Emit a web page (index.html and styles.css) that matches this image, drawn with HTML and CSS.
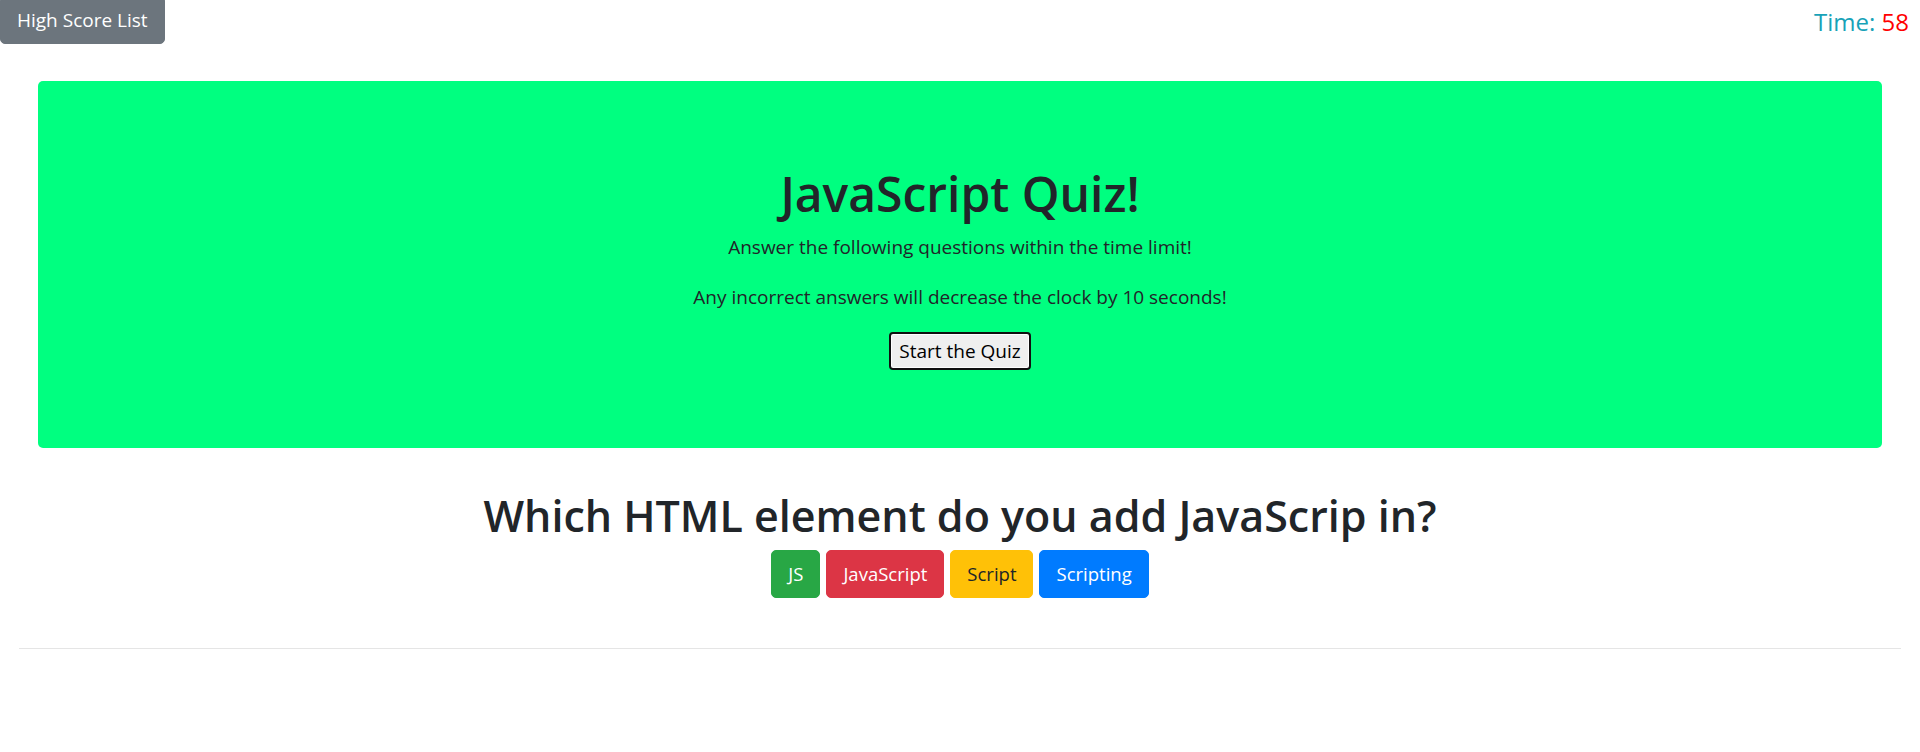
FILE: index.html
```html
<!DOCTYPE html>
<html lang="en">
<head>
<meta charset="utf-8">
<title>JavaScript Quiz</title>
<link rel="stylesheet" href="styles.css">
</head>
<body>
<header class="topbar">
  <button class="btn btn-secondary hs-btn">High Score List</button>
  <div class="timer">Time: <span class="secs">58</span></div>
</header>
<main class="page">
  <section class="jumbo">
    <h1 class="jumbo-title">JavaScript Quiz!</h1>
    <p class="lead">Answer the following questions within the time limit!</p>
    <p class="lead">Any incorrect answers will decrease the clock by 10 seconds!</p>
    <button class="start-btn">Start the Quiz</button>
  </section>
  <section class="question">
    <h2 class="question-title">Which HTML element do you add JavaScrip in?</h2>
    <div class="answers">
      <button class="btn btn-success">JS</button>
      <button class="btn btn-danger">JavaScript</button>
      <button class="btn btn-warning">Script</button>
      <button class="btn btn-primary">Scripting</button>
    </div>
  </section>
  <hr class="rule">
</main>
</body>
</html>
```

FILE: styles.css
```css
* { box-sizing: border-box; }

html, body {
  margin: 0;
  padding: 0;
  background: #fff;
}

body {
  font-family: "Open Sans", "Noto Sans", sans-serif;
  color: #212529;
  font-size: 16px;
}

.topbar {
  display: flex;
  justify-content: space-between;
  align-items: flex-start;
  height: 44px;
}

.btn {
  font-family: inherit;
  font-size: 19px;
  line-height: 30px;
  padding: 8px 16px;
  border: 1px solid transparent;
  border-radius: 5px;
  color: #fff;
  cursor: pointer;
}

.btn-secondary { background: #6c757d; border-color: #6c757d; }
.btn-success { background: #28a745; border-color: #28a745; }
.btn-danger { background: #dc3545; border-color: #dc3545; }
.btn-warning { background: #ffc107; border-color: #ffc107; color: #212529; }
.btn-primary { background: #007bff; border-color: #007bff; }

.hs-btn {
  margin-top: -4px;
}

.answers .btn {
  font-size: 18.5px;
}

.timer {
  font-size: 24px;
  line-height: 1.2;
  padding-top: 8px;
  padding-right: 11px;
  color: #17a2b8;
}

.secs { color: #ff0000; }

.page {
  padding: 0 19px;
}

.jumbo {
  margin: 37px 19px 0;
  height: 367px;
  padding: 84px 32px 0;
  background: #00ff80;
  border-radius: 5px;
  text-align: center;
}

.jumbo-title {
  margin: 0 0 9px;
  font-size: 48px;
  font-weight: 600;
  line-height: 1.2;
}

.lead {
  margin: 0 0 20px;
  font-size: 19px;
  line-height: 30px;
}

.start-btn {
  font-family: inherit;
  font-size: 19px;
  line-height: 26px;
  height: 38px;
  padding: 0 8px;
  color: #000;
  background: #efefef;
  border: 2px solid #101010;
  border-radius: 4px;
  box-shadow: inset 0 0 0 1px #fff;
}

.question {
  margin-top: 42px;
  text-align: center;
}

.question-title {
  margin: 0 0 8px;
  font-size: 43px;
  font-weight: 600;
  line-height: 1.2;
}

.answers {
  display: flex;
  justify-content: center;
  gap: 6px;
}

.rule {
  margin: 50px 0 0;
  border: 0;
  border-top: 1px solid rgba(0, 0, 0, 0.1);
}
```
